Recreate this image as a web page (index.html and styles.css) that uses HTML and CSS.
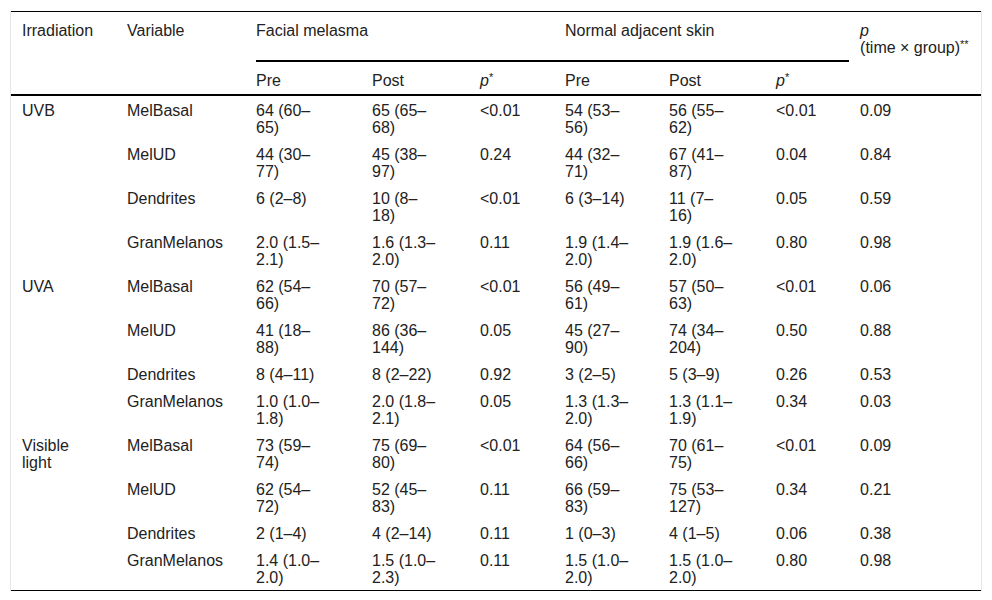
FILE: index.html
```html
<!DOCTYPE html>
<html lang="en">
<head>
<meta charset="utf-8">
<title>Table</title>
<link rel="stylesheet" href="styles.css">
</head>
<body>
<div class="frame">
<table class="data">
<colgroup>
<col class="c1"><col class="c2"><col class="c3"><col class="c4"><col class="c5"><col class="c6"><col class="c7"><col class="c8"><col class="c9">
</colgroup>
<thead>
<tr class="h1">
<th rowspan="2">Irradiation</th>
<th rowspan="2">Variable</th>
<th colspan="3" class="grp first">Facial melasma</th>
<th colspan="3" class="grp">Normal adjacent skin</th>
<th rowspan="2" class="last"><i>p</i><br>(time × group)<sup>**</sup></th>
</tr>
<tr class="h2">
<th>Pre</th><th>Post</th><th><i>p</i><sup>*</sup></th>
<th>Pre</th><th>Post</th><th><i>p</i><sup>*</sup></th>
</tr>
</thead>
<tbody>
<tr><td rowspan="4">UVB</td><td>MelBasal</td><td>64 (60–65)</td><td>65 (65–68)</td><td>&lt;0.01</td><td>54 (53–56)</td><td>56 (55–62)</td><td>&lt;0.01</td><td>0.09</td></tr>
<tr><td>MelUD</td><td>44 (30–77)</td><td>45 (38–97)</td><td>0.24</td><td>44 (32–71)</td><td>67 (41–87)</td><td>0.04</td><td>0.84</td></tr>
<tr><td>Dendrites</td><td>6 (2–8)</td><td>10 (8–18)</td><td>&lt;0.01</td><td>6 (3–14)</td><td>11 (7–16)</td><td>0.05</td><td>0.59</td></tr>
<tr><td>GranMelanos</td><td>2.0 (1.5–2.1)</td><td>1.6 (1.3–2.0)</td><td>0.11</td><td>1.9 (1.4–2.0)</td><td>1.9 (1.6–2.0)</td><td>0.80</td><td>0.98</td></tr>
<tr><td rowspan="4">UVA</td><td>MelBasal</td><td>62 (54–66)</td><td>70 (57–72)</td><td>&lt;0.01</td><td>56 (49–61)</td><td>57 (50–63)</td><td>&lt;0.01</td><td>0.06</td></tr>
<tr><td>MelUD</td><td>41 (18–88)</td><td>86 (36–144)</td><td>0.05</td><td>45 (27–90)</td><td>74 (34–204)</td><td>0.50</td><td>0.88</td></tr>
<tr><td>Dendrites</td><td>8 (4–11)</td><td>8 (2–22)</td><td>0.92</td><td>3 (2–5)</td><td>5 (3–9)</td><td>0.26</td><td>0.53</td></tr>
<tr><td>GranMelanos</td><td>1.0 (1.0–1.8)</td><td>2.0 (1.8–2.1)</td><td>0.05</td><td>1.3 (1.3–2.0)</td><td>1.3 (1.1–1.9)</td><td>0.34</td><td>0.03</td></tr>
<tr><td rowspan="4">Visible light</td><td>MelBasal</td><td>73 (59–74)</td><td>75 (69–80)</td><td>&lt;0.01</td><td>64 (56–66)</td><td>70 (61–75)</td><td>&lt;0.01</td><td>0.09</td></tr>
<tr><td>MelUD</td><td>62 (54–72)</td><td>52 (45–83)</td><td>0.11</td><td>66 (59–83)</td><td>75 (53–127)</td><td>0.34</td><td>0.21</td></tr>
<tr><td>Dendrites</td><td>2 (1–4)</td><td>4 (2–14)</td><td>0.11</td><td>1 (0–3)</td><td>4 (1–5)</td><td>0.06</td><td>0.38</td></tr>
<tr><td>GranMelanos</td><td>1.4 (1.0–2.0)</td><td>1.5 (1.0–2.3)</td><td>0.11</td><td>1.5 (1.0–2.0)</td><td>1.5 (1.0–2.0)</td><td>0.80</td><td>0.98</td></tr>
</tbody>
</table>
</div>
</body>
</html>
```
FILE: styles.css
```css
html, body {
  margin: 0;
  padding: 0;
  background: #fff;
}
body {
  font-family: "Liberation Sans", Arial, sans-serif;
  font-size: 16px;
  line-height: 17px;
  color: #222;
}
.frame {
  margin: 11px 10px 0 10px;
  border-left: 1px solid #e6e6e6;
  border-right: 1px solid #e6e6e6;
}
.data {
  width: 970px;
  table-layout: fixed;
  border-collapse: collapse;
  border-top: 1px solid #000;
  border-bottom: 1px solid #000;
}
.c1 { width: 105px; }
.c2 { width: 129px; }
.c3 { width: 116px; }
.c4 { width: 108px; }
.c5 { width: 85px; }
.c6 { width: 104px; }
.c7 { width: 107px; }
.c8 { width: 84px; }
.c9 { width: 132px; }
.data thead {
  border-bottom: 2px solid #000;
}
.data th {
  font-weight: normal;
  text-align: left;
  vertical-align: top;
  padding: 10px 29px 0 11px;
}
.data .h1 th {
  height: 40px;
}
.data .h1 .grp {
  background-image: linear-gradient(#000, #000);
  background-repeat: no-repeat;
  background-position: right bottom;
  background-size: 100% 2px;
}
.data .h1 .grp.first {
  background-size: calc(100% - 11px) 2px;
}
.data .h1 .last {
  padding-right: 8px;
}
.data .h2 th {
  padding-top: 10px;
  padding-bottom: 5px;
}
.data td {
  vertical-align: top;
  padding: 6px 29px 4px 11px;
}
.data sup {
  font-size: 11px;
  line-height: 0;
  vertical-align: 5px;
}
.data i {
  font-style: italic;
}
```
